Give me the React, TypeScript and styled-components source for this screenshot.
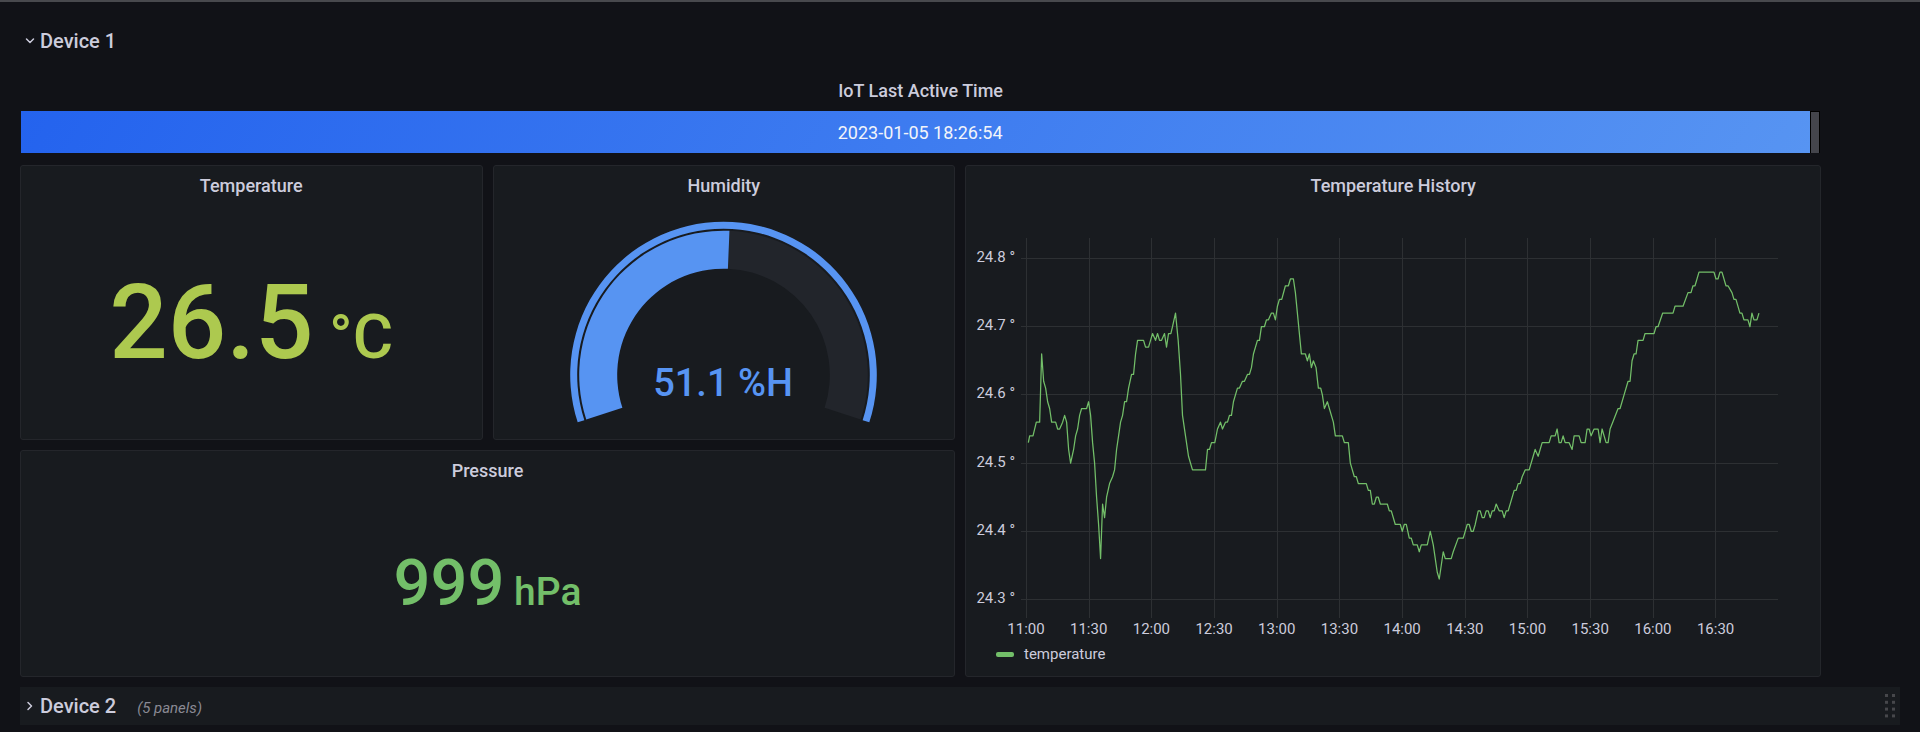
import React from 'react';
import styled, { createGlobalStyle } from 'styled-components';

const color = {
  canvas: '#111217',
  panel: '#181b1f',
  border: '#24262b',
  text: '#ccccdc',
  muted: '#8a8a94',
  blue: '#5794f2',
  green: '#73bf69',
  lime: '#adc94f',
  track: '#22252b',
};

const GlobalStyle = createGlobalStyle`
  *, *::before, *::after { box-sizing: border-box; }
  body {
    margin: 0;
    background: ${color.canvas};
    color: ${color.text};
    font-family: Roboto, "Liberation Sans", sans-serif;
    font-size: 18px;
  }
`;

const Page = styled.main`
  border-top: 2px solid #48494d;
  padding: 20px 20px 7px;
`;

const Dashboard = styled.div`
  display: grid;
  grid-template-columns: repeat(24, minmax(0, 1fr));
  grid-template-rows: 38px 85px 275px minmax(227px, auto) 38px;
  gap: 10px;
`;

const RowHeader = styled.div<{ $collapsed?: boolean }>`
  grid-column: 1 / -1;
  display: flex;
  align-items: center;
  justify-content: space-between;
  padding-right: 5px;
  background: ${(p) => (p.$collapsed ? color.panel : 'transparent')};
`;

const RowToggle = styled.button`
  display: flex;
  align-items: center;
  gap: 5px;
  height: 38px;
  padding: 0 5px;
  border: 0;
  background: none;
  color: ${color.text};
  font: 500 20px/24px Roboto, "Liberation Sans", sans-serif;
  cursor: pointer;
`;

const PanelCount = styled.span`
  margin-left: 16px;
  color: ${color.muted};
  font-size: 15px;
  font-weight: 400;
  font-style: italic;
  line-height: 20px;
  padding-top: 4px;
`;

const Panel = styled.section<{ $columns: string; $rows?: string; $plain?: boolean }>`
  grid-column: ${(p) => p.$columns};
  grid-row: ${(p) => p.$rows ?? 'auto'};
  display: flex;
  flex-direction: column;
  min-width: 0;
  border: 1px solid ${(p) => (p.$plain ? 'transparent' : color.border)};
  border-radius: 3px;
  background: ${(p) => (p.$plain ? 'transparent' : color.panel)};
`;

const PanelTitle = styled.h2`
  margin: 0;
  font-size: 18px;
  font-weight: 500;
  line-height: 40px;
  text-align: center;
`;

const BarTrack = styled.div`
  display: flex;
  gap: 1px;
  height: 42px;
  padding-right: 1px;
  background: #000;
`;

const BarFill = styled.div`
  flex: 1;
  padding-left: 9px;
  background: linear-gradient(120deg, #2463ee, ${color.blue});
  color: #f2f4fa;
  line-height: 43px;
  text-align: center;
`;

const BarRest = styled.div`
  width: 8px;
  margin-top: 1px;
  background: #44454c;
`;

const Stat = styled.div<{ $size: number; $color: string }>`
  flex: 1;
  display: flex;
  align-items: center;
  justify-content: center;
  color: ${(p) => p.$color};
  font-size: ${(p) => p.$size}px;
  font-weight: 500;
  line-height: 1;
`;

const StatUnit = styled.span<{ $size: number }>`
  font-size: ${(p) => p.$size}px;
`;

const GaugeArea = styled.div`
  flex: 1;
  display: flex;
  align-items: center;
  justify-content: center;
`;

const GaugeValue = styled.text`
  fill: ${color.blue};
  font-size: 38px;
  font-weight: 500;
  text-anchor: middle;
`;

const Chart = styled.div`
  display: grid;
  grid-template-columns: 49px minmax(0, 1fr);
  grid-template-rows: 380px 20px;
  gap: 1px 6px;
  padding: 32px 42px 0 0;
  font-size: 15px;
  line-height: 20px;
`;

const YAxis = styled.div`
  display: flex;
  flex-direction: column;
  justify-content: space-between;
  padding: 9px 0 10px;
  text-align: right;
`;

const Plot = styled.svg`
  display: block;
  width: 100%;
  height: 100%;
  overflow: visible;
`;

const XAxis = styled.div`
  grid-column: 2;
  display: grid;
  grid-template-columns: repeat(12, minmax(0, 1fr));
  padding-left: 5px;
`;

const XLabel = styled.span`
  justify-self: start;
  transform: translateX(-50%);
`;

const Legend = styled.div`
  display: flex;
  align-items: center;
  gap: 10px;
  padding: 5px 30px;
  font-size: 15px;
  line-height: 20px;
`;

const Swatch = styled.span`
  width: 18px;
  height: 5px;
  border-radius: 2px;
  background: ${color.green};
`;

/* Polar helper: 0deg points up, angles grow clockwise. */
const polar = (r: number, deg: number) => {
  const a = (deg * Math.PI) / 180;
  return `${(153.5 + r * Math.sin(a)).toFixed(2)} ${(154 - r * Math.cos(a)).toFixed(2)}`;
};

const ring = (outer: number, inner: number, from: number, to: number) => {
  const large = to - from > 180 ? 1 : 0;
  return `M${polar(outer, from)}A${outer} ${outer} 0 ${large} 1 ${polar(outer, to)}L${polar(inner, to)}A${inner} ${inner} 0 ${large} 0 ${polar(inner, from)}Z`;
};

const Gauge = ({ value, label }: { value: number; label: string }) => {
  const end = -108 + (216 * value) / 100;
  return (
    <GaugeArea>
      <svg width="307" height="203" viewBox="0 0 307 203" role="img" aria-label={label}>
        <path d={ring(153.3, 146.3, -108, 108)} fill={color.blue} />
        <path d={ring(144.3, 106.3, end, 108)} fill={color.track} />
        <path d={ring(144.3, 106.3, -108, end)} fill={color.blue} />
        <GaugeValue x="153" y="175">{label}</GaugeValue>
      </svg>
    </GaugeArea>
  );
};

/* Each block holds [offset, hundredths above 24°] pairs, counted from the block's origin. */
const series: { origin: number; points: [number, number][] }[] = [
  {
    origin: -183,
    points: [
      [205, 53], [209, 54], [219, 54], [229, 56], [239, 56], [245, 66], [251, 62], [257, 61], [263, 59], [269, 58],
      [275, 56], [287, 56], [293, 55], [299, 55], [308, 56], [314, 57], [320, 56], [326, 52], [332, 50], [341, 52],
      [347, 54], [353, 55], [359, 57], [365, 58], [380, 58], [386, 59], [392, 57], [398, 53], [404, 50], [410, 45],
      [416, 41], [422, 36], [428, 44], [434, 42], [440, 45], [449, 47], [458, 48], [464, 49], [470, 52], [476, 54],
      [482, 56], [488, 57], [494, 59], [500, 59], [506, 61], [515, 63], [521, 63], [527, 66], [533, 68], [551, 68],
      [557, 67], [566, 67], [572, 68], [578, 69], [587, 68], [593, 69], [599, 68], [605, 68], [614, 69], [620, 67],
      [626, 69], [633, 69], [638, 70], [647, 72], [655, 68], [662, 63], [668, 57], [677, 54], [686, 51], [698, 49],
      [737, 49], [743, 52], [749, 52], [755, 53], [765, 53], [773, 55], [782, 56], [788, 55], [797, 56], [803, 56],
      [809, 57], [815, 57], [821, 59], [827, 60], [833, 61], [839, 61], [848, 62], [854, 62], [863, 63], [869, 63],
      [875, 64], [881, 66], [893, 68], [899, 68], [905, 70], [914, 70], [920, 71], [926, 71], [935, 72], [941, 72],
    ],
  },
  {
    origin: 657,
    points: [
      [107, 71], [113, 73], [119, 74], [126, 74], [137, 76], [146, 76], [152, 77], [161, 77], [167, 75], [185, 66],
      [197, 66], [203, 65], [209, 66], [215, 64], [221, 65], [229, 64], [236, 61], [243, 61], [248, 60], [254, 58],
      [263, 59], [281, 56], [287, 54], [308, 54], [314, 53], [326, 53], [332, 50], [344, 48], [350, 48], [356, 47],
      [380, 47], [386, 46], [392, 46], [398, 44], [404, 44], [410, 45], [416, 45], [422, 44], [443, 44], [449, 43],
      [455, 43], [467, 41], [482, 41], [488, 40], [494, 41], [500, 41], [509, 39], [515, 39], [521, 38], [533, 38],
      [539, 37], [545, 38], [563, 38], [572, 40], [581, 38], [593, 34], [599, 33], [611, 37], [617, 36], [635, 36],
      [641, 37], [656, 39], [671, 39], [683, 41], [689, 41], [695, 40], [701, 40], [707, 41], [716, 43], [722, 43],
      [728, 42], [734, 42], [740, 43], [746, 43], [752, 42], [758, 43], [764, 43], [770, 44], [779, 43], [788, 43],
      [794, 42], [800, 43], [806, 43], [824, 46], [830, 46], [836, 47], [842, 47], [848, 48], [857, 49], [869, 49],
      [887, 52], [896, 51],
    ],
  },
  {
    origin: 1437,
    points: [
      [128, 53], [149, 53], [155, 54], [167, 54], [173, 55], [179, 53], [185, 53], [191, 54], [197, 53], [209, 53],
      [218, 52], [224, 54], [239, 54], [245, 53], [257, 53], [263, 55], [269, 55], [275, 54], [284, 55], [296, 55],
      [302, 53], [308, 55], [320, 53], [326, 53], [332, 55], [340, 56], [356, 58], [362, 58], [374, 60], [386, 62],
      [392, 62], [398, 65], [404, 66], [410, 66], [416, 68], [431, 68], [437, 69], [464, 69], [470, 70], [476, 70],
      [490, 72], [521, 72], [527, 73], [551, 73], [566, 75], [575, 75], [581, 76], [587, 76], [599, 78], [644, 78],
      [650, 77], [656, 77], [662, 78], [668, 78], [680, 76], [686, 76], [698, 75], [704, 74], [710, 74], [722, 72],
      [728, 72], [734, 71], [746, 71], [752, 70], [758, 72], [764, 71], [773, 71], [779, 72],
    ],
  },
];

const yOf = (v: number) => 61.5 + (80 - v) * 20.46;
const line = series
  .flatMap(({ origin, points }) => points.map(([x, v]) => `${x + origin},${yOf(v).toFixed(1)}`))
  .join(' ');

const degrees = ['24.8 °', '24.7 °', '24.6 °', '24.5 °', '24.4 °', '24.3 °'];
const times = ['11:00', '11:30', '12:00', '12:30', '13:00', '13:30', '14:00', '14:30', '15:00', '15:30', '16:00', '16:30'];

const TemperatureChart = () => (
  <Chart>
    <YAxis>
      {degrees.map((d) => (
        <span key={d}>{d}</span>
      ))}
    </YAxis>
    <Plot viewBox="0 0 2274 1140" preserveAspectRatio="none" role="img" aria-label="Temperature over time">
      <g stroke="#2d3033" strokeWidth="1" shapeRendering="crispEdges">
        {degrees.map((d, i) => (
          <line key={d} x1="0" x2="2274" y1={yOf(80 - i * 10)} y2={yOf(80 - i * 10)} vectorEffect="non-scaling-stroke" />
        ))}
        {times.map((t, i) => (
          <line key={t} x1={16.5 + i * 188.2} x2={16.5 + i * 188.2} y1="0" y2="1140" vectorEffect="non-scaling-stroke" />
        ))}
      </g>
      <polyline points={line} fill="none" stroke={color.green} strokeWidth="1.25" strokeLinejoin="round" vectorEffect="non-scaling-stroke" />
    </Plot>
    <XAxis>
      {times.map((t) => (
        <XLabel key={t}>{t}</XLabel>
      ))}
    </XAxis>
  </Chart>
);

const Chevron = ({ open }: { open?: boolean }) => (
  <svg width="10" height="12" viewBox="0 0 10 12" fill="none" stroke={color.text} strokeWidth="1.5" strokeLinecap="round" strokeLinejoin="round" aria-hidden="true">
    <path d={open ? 'M1.5 4l3.5 3.5L8.5 4' : 'M3 2.5L6.5 6 3 9.5'} />
  </svg>
);

const DragHandle = () => (
  <svg width="10" height="24" viewBox="0 0 10 24" fill="#46474b" aria-hidden="true">
    {[0, 1, 2, 3].flatMap((r) => [0, 7].map((x) => <rect key={`${r}-${x}`} x={x} y={r * 6.8} width="3" height="3" />))}
  </svg>
);

export default function App() {
  return (
    <>
      <GlobalStyle />
      <Page>
        <Dashboard>
          <RowHeader>
            <RowToggle type="button" aria-expanded="true">
              <Chevron open />
              Device 1
            </RowToggle>
          </RowHeader>

          <Panel $columns="1 / span 23" $plain>
            <PanelTitle>IoT Last Active Time</PanelTitle>
            <BarTrack>
              <BarFill>2023-01-05 18:26:54</BarFill>
              <BarRest />
            </BarTrack>
          </Panel>

          <Panel $columns="1 / span 6" $rows="3">
            <PanelTitle>Temperature</PanelTitle>
            <Stat $size={103} $color={color.lime}>
              <div>
                26.5<StatUnit $size={62}> °C</StatUnit>
              </div>
            </Stat>
          </Panel>

          <Panel $columns="7 / span 6" $rows="3">
            <PanelTitle>Humidity</PanelTitle>
            <Gauge value={51.1} label="51.1 %H" />
          </Panel>

          <Panel $columns="13 / span 11" $rows="3 / span 2">
            <PanelTitle>Temperature History</PanelTitle>
            <TemperatureChart />
            <Legend>
              <Swatch />
              temperature
            </Legend>
          </Panel>

          <Panel $columns="1 / span 12" $rows="4">
            <PanelTitle>Pressure</PanelTitle>
            <Stat $size={65} $color={color.green}>
              <div>
                999<StatUnit $size={39}> hPa</StatUnit>
              </div>
            </Stat>
          </Panel>

          <RowHeader $collapsed>
            <RowToggle type="button" aria-expanded="false">
              <Chevron />
              Device 2
              <PanelCount>(5 panels)</PanelCount>
            </RowToggle>
            <DragHandle />
          </RowHeader>
        </Dashboard>
      </Page>
    </>
  );
}
